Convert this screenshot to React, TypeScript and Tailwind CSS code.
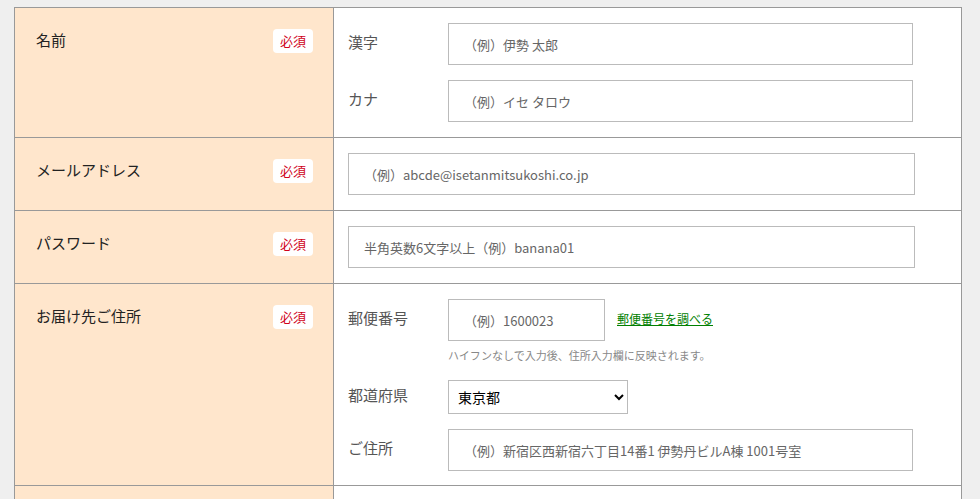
import React from "react";

const Badge = () => (
  <span className="rounded bg-white px-[7px] py-[3px] text-[13px] leading-[18px] text-[#d0021b]">必須</span>
);

const Left = ({ label, h }: { label: string; h: string }) => (
  <div className={`flex w-[319px] shrink-0 items-start justify-between border-r border-[#999] bg-[#ffe6cc] pl-[21px] pr-[20px] pt-[21px] ${h}`}>
    <span className="text-[15px] leading-[22px] text-[#222]">{label}</span>
    <Badge />
  </div>
);

const inputCls =
  "h-[42px] border border-[#bbb] bg-white px-[15px] text-[13px] text-[#444] placeholder:text-[#666] outline-none";

export default function App() {
  return (
    <div
      className="h-[499px] w-[980px] overflow-hidden bg-[#efefef] pl-[14px] pt-[7px]"
      style={{ fontFamily: '"Noto Sans CJK JP", "Noto Sans", sans-serif' }}
    >
      <div className="w-[948px] border-l border-r border-t border-[#999]">
        <div className="flex border-b border-[#999]">
          <Left label="名前" h="h-[129px]" />
          <div className="flex flex-1 flex-col gap-[15px] bg-white pl-[14px] pt-[15px]">
            <div className="flex items-center">
              <span className="-mt-[3px] w-[100px] text-[15px] text-[#555]">漢字</span>
              <input className={`${inputCls} w-[465px]`} placeholder="（例）伊勢 太郎" />
            </div>
            <div className="flex items-center">
              <span className="-mt-[3px] w-[100px] text-[15px] text-[#555]">カナ</span>
              <input className={`${inputCls} w-[465px]`} placeholder="（例）イセ タロウ" />
            </div>
          </div>
        </div>
        <div className="flex border-b border-[#999]">
          <Left label="メールアドレス" h="h-[72px]" />
          <div className="flex flex-1 items-start bg-white pl-[14px] pt-[15px]">
            <input className={`${inputCls} w-[567px]`} placeholder="（例）abcde@isetanmitsukoshi.co.jp" />
          </div>
        </div>
        <div className="flex border-b border-[#999]">
          <Left label="パスワード" h="h-[72px]" />
          <div className="flex flex-1 items-start bg-white pl-[14px] pt-[15px]">
            <input className={`${inputCls} w-[567px] px-[10px]`} placeholder="半角英数6文字以上（例）banana01" />
          </div>
        </div>
        <div className="flex border-b border-[#999]">
          <Left label="お届け先ご住所" h="h-[201px]" />
          <div className="flex flex-1 flex-col bg-white pl-[14px] pt-[15px]">
            <div className="flex items-center">
              <span className="-mt-[3px] w-[100px] text-[15px] text-[#555]">郵便番号</span>
              <input className={`${inputCls} w-[157px]`} placeholder="（例）1600023" />
              <a href="#" className="ml-[12px] -mt-[3px] text-[12px] text-[#008000] underline">郵便番号を調べる</a>
            </div>
            <div className="ml-[100px] mt-[5px] text-[11px] leading-[18px] text-[#888]">
              ハイフンなしで入力後、住所入力欄に反映されます。
            </div>
            <div className="mt-[16px] flex items-center">
              <span className="-mt-[3px] w-[100px] text-[15px] text-[#555]">都道府県</span>
              <select className="h-[34px] w-[180px] border border-[#bbb] bg-white px-[5px] text-[14px] text-black" defaultValue="東京都">
                <option>東京都</option>
              </select>
            </div>
            <div className="mt-[15px] flex items-center">
              <span className="-mt-[3px] w-[100px] text-[15px] text-[#555]">ご住所</span>
              <input className={`${inputCls} w-[465px]`} placeholder="（例）新宿区西新宿六丁目14番1 伊勢丹ビルA棟 1001号室" />
            </div>
          </div>
        </div>
        <div className="flex">
          <div className="h-[40px] w-[319px] border-r border-[#999] bg-[#ffe6cc]" />
          <div className="flex-1 bg-white" />
        </div>
      </div>
    </div>
  );
}
